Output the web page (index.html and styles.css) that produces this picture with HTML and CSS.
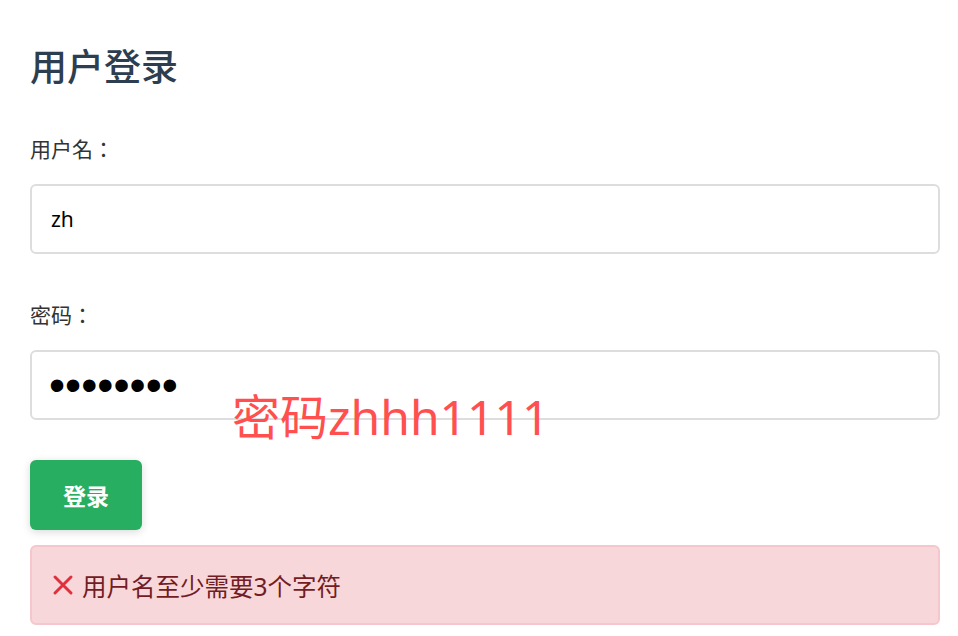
FILE: index.html
```html
<!DOCTYPE html>
<html lang="en">

<head>
    <meta charset="UTF-8">
    <meta name="viewport" content="width=device-width, initial-scale=1.0">
    <title>用户登录</title>
    <link rel="stylesheet" href="styles.css">
</head>

<body>

    <div class="container">
        <h1>用户登录</h1>

        <form id="loginForm">
            <div class="form-group">
                <label for="username">用户名：</label>
                <input type="text" id="username" name="username" value="zh">
            </div>

            <div class="form-group">
                <label for="password">密码：</label>
                <input type="password" id="password" name="password" value="zhhh1111">
            </div>

            <button type="submit">登录</button>
        </form>

        <!-- Error message -->
        <div class="message error-message">
            <svg class="error-icon" viewBox="0 0 22 22" width="22" height="22">
                <path d="M3 3 L19 19 M19 3 L3 19" stroke="#e0303e" stroke-width="3" stroke-linecap="round" fill="none" />
            </svg>
            <span>用户名至少需要3个字符</span>
        </div>
    </div>

    <!-- Debug overlay -->
    <div class="debug-tip">密码zhhh1111</div>

</body>

</html>
```

FILE: styles.css
```css
body {
    font-family: "Noto Sans", "Noto Sans CJK SC", sans-serif;
    margin: 0;
    padding: 0;
    background-color: #fff;
}

.container {
    max-width: 910px;
    margin: 0 0 0 30px;
    padding-top: 45px;
}

h1 {
    color: #2c3e50;
    font-size: 37px;
    font-weight: 500;
    line-height: 44px;
    margin: 0 0 39px;
}

.form-group {
    margin-bottom: 40px;
}

label {
    display: block;
    color: #333;
    font-family: "Noto Sans", "Noto Sans CJK TC", sans-serif;
    font-size: 21px;
    line-height: 42px;
    margin-bottom: 14px;
}

input[type="text"],
input[type="password"] {
    display: block;
    width: 100%;
    height: 70px;
    box-sizing: border-box;
    padding: 0 19px;
    border: 2px solid #ddd;
    border-radius: 6px;
    font-family: "Noto Sans", "Noto Sans CJK SC", sans-serif;
    font-size: 21px;
    color: #000;
    outline: none;
}

input[type="password"] {
    font-family: "Liberation Sans", sans-serif;
    font-size: 46px;
    padding-left: 17px;
}

button {
    display: block;
    width: 112px;
    height: 70px;
    padding: 0;
    color: #fff;
    background-color: #27ae60;
    border: none;
    border-radius: 6px;
    box-shadow: 0 2px 8px rgba(0, 0, 0, 0.15);
    font-family: "Noto Sans", "Noto Sans CJK SC", sans-serif;
    font-size: 23px;
    font-weight: bold;
    cursor: pointer;
}

.message {
    margin-top: 15px;
    height: 80px;
    box-sizing: border-box;
    padding: 0 20px;
    border-radius: 6px;
    display: flex;
    align-items: center;
    gap: 8px;
}

.error-message {
    color: #721c24;
    background-color: #f8d7da;
    border: 2px solid #f5c6cb;
    font-size: 24.5px;
}

.error-icon {
    flex: none;
}

.debug-tip {
    position: absolute;
    left: 232px;
    top: 393px;
    color: #ff4f4f;
    font-size: 48px;
    line-height: 48px;
    white-space: nowrap;
}
```
